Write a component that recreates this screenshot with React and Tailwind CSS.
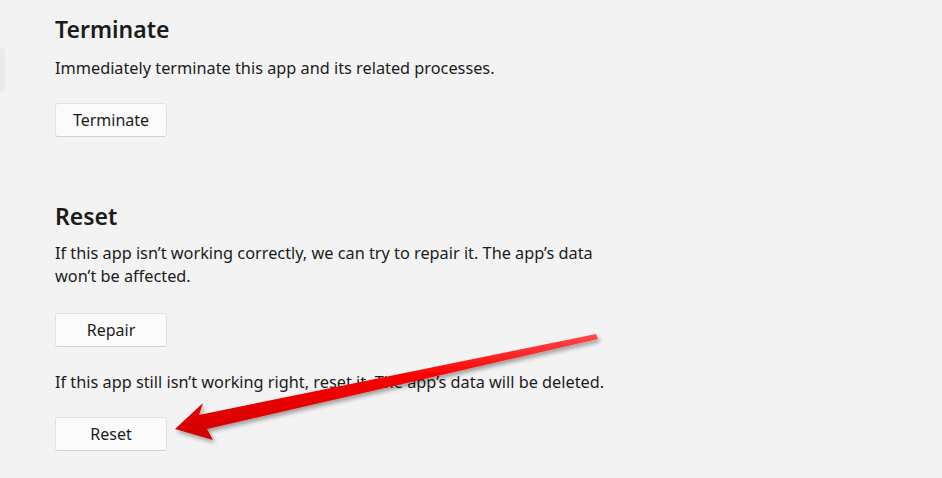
import React from "react";

function WinButton({ children, className = "" }) {
  return (
    <button
      type="button"
      className={`w-[112px] h-[34px] flex items-center justify-center bg-[#fbfbfb] border border-[#e3e3e3] border-b-[#d0d0d0] rounded-[3px] text-[16px] text-[#1b1b1b] ${className}`}
    >
      {children}
    </button>
  );
}

function Arrow() {
  return (
    <svg className="absolute inset-0 pointer-events-none" width="942" height="478" viewBox="0 0 942 478">
      <defs>
        <linearGradient id="shaft" x1="0" y1="0" x2="0" y2="1">
          <stop offset="0" stopColor="#ff4a4a" />
          <stop offset="0.4" stopColor="#f80000" />
          <stop offset="1" stopColor="#d00000" />
        </linearGradient>
        <filter id="shadow" x="-10%" y="-10%" width="120%" height="140%">
          <feDropShadow dx="2" dy="3" stdDeviation="2" floodColor="#000" floodOpacity="0.35" />
        </filter>
      </defs>
      <polygon
        points="596,334 598,339 207,429 213,440 175,429 203,403 199,415"
        fill="url(#shaft)"
        filter="url(#shadow)"
      />
    </svg>
  );
}

export default function App() {
  return (
    <div
      className="relative w-[942px] h-[478px] overflow-hidden bg-[#f3f3f3] text-[#1b1b1b]"
      style={{ fontFamily: '"Noto Sans", "Open Sans", sans-serif' }}
    >
      {/* sliver of the nav item on the left */}
      <div className="absolute left-[-6px] top-[48px] w-[11px] h-[45px] rounded-[4px] bg-[#eaeaea]" />

      <div className="flex flex-col items-start pl-[55px] pt-[13px]">
        <h2 className="text-[23px] leading-[32px] font-semibold">Terminate</h2>
        <p className="mt-[11px] text-[16.3px] leading-[24px]">
          Immediately terminate this app and its related processes.
        </p>
        <WinButton className="mt-[23px]">Terminate</WinButton>

        <h2 className="mt-[63px] text-[23px] leading-[32px] font-semibold">Reset</h2>
        <p className="mt-[10px] text-[16.3px] leading-[23px]">
          If this app isn’t working correctly, we can try to repair it. The app’s data
          <br />
          won’t be affected.
        </p>
        <WinButton className="mt-[25px]">Repair</WinButton>

        <p className="mt-[24px] text-[16.3px] leading-[23px]">
          If this app still isn’t working right, reset it. The app’s data will be deleted.
        </p>
        <WinButton className="mt-[23px]">Reset</WinButton>
      </div>

      <Arrow />
    </div>
  );
}
